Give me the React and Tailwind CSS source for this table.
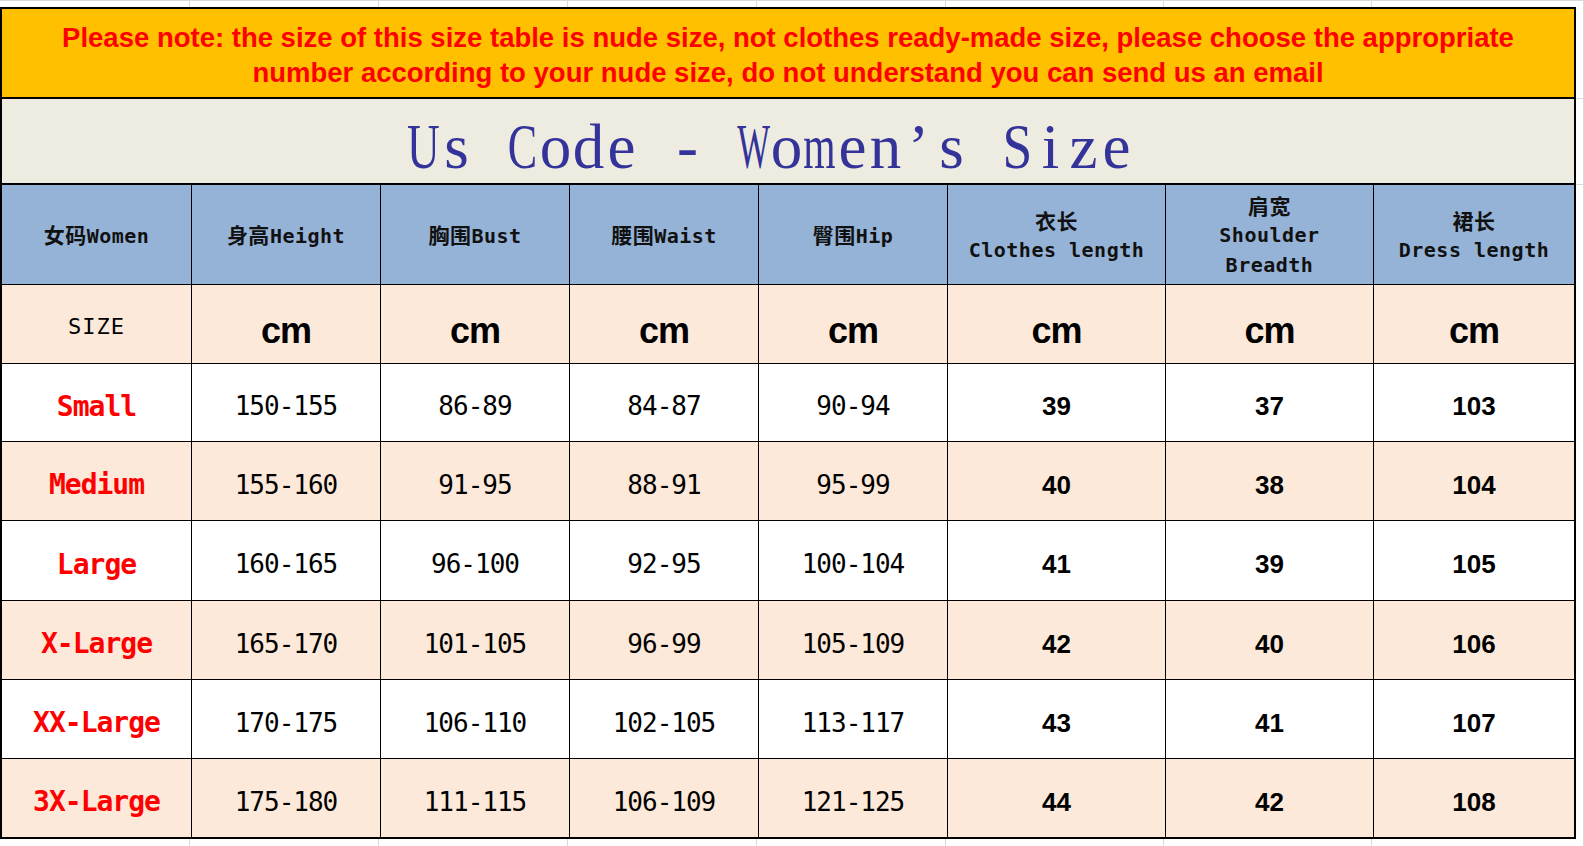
import React from "react";

const cols = "grid grid-cols-[190px_189px_189px_189px_189px_218px_208px_200px]";
const mono = "font-['DejaVu_Sans_Mono','Noto_Sans_CJK_SC',monospace]";
const arial = "font-['Liberation_Sans',Arial,sans-serif]";

const headers = [
  { zh: "女码", en: ["Women"] },
  { zh: "身高", en: ["Height"] },
  { zh: "胸围", en: ["Bust"] },
  { zh: "腰围", en: ["Waist"] },
  { zh: "臀围", en: ["Hip"] },
  { zh: "衣长", en: ["Clothes length"], stack: true },
  { zh: "肩宽", en: ["Shoulder", "Breadth"], stack: true },
  { zh: "裙长", en: ["Dress length"], stack: true },
];

const rows = [
  { size: "Small", h: "h-[78px]", bg: "bg-white", v: ["150-155", "86-89", "84-87", "90-94", "39", "37", "103"] },
  { size: "Medium", h: "h-[79px]", bg: "bg-[#fde9d9]", v: ["155-160", "91-95", "88-91", "95-99", "40", "38", "104"] },
  { size: "Large", h: "h-[80px]", bg: "bg-white", v: ["160-165", "96-100", "92-95", "100-104", "41", "39", "105"] },
  { size: "X-Large", h: "h-[79px]", bg: "bg-[#fde9d9]", v: ["165-170", "101-105", "96-99", "105-109", "42", "40", "106"] },
  { size: "XX-Large", h: "h-[79px]", bg: "bg-white", v: ["170-175", "106-110", "102-105", "113-117", "43", "41", "107"] },
  { size: "3X-Large", h: "h-[78px]", bg: "bg-[#fde9d9]", v: ["175-180", "111-115", "106-109", "121-125", "44", "42", "108"] },
];

// squeeze wide serif letters so the title reads like a half-width CJK font
const squeeze = {
  U: "scale-x-[0.72]",
  C: "scale-x-[0.7]",
  W: "scale-x-[0.55]",
  m: "scale-x-[0.66]",
  S: "scale-x-[0.85]",
};

const title = "Us Code - Women’s Size";

const GridStrip = ({ h }) => (
  <div className={`${cols} ${h} w-[1576px]`}>
    {Array.from({ length: 8 }).map((_, i) => (
      <div key={i} className={i < 7 ? "border-r border-[#d9d9d9]" : ""} />
    ))}
  </div>
);

const HeaderCell = ({ data, last }) => (
  <div
    className={`flex flex-col items-center justify-center border-b border-black ${
      last ? "" : "border-r"
    } ${mono} font-bold text-[20px] leading-[30px] tracking-[0.5px] text-[#111]`}
  >
    {data.stack ? (
      <>
        <span className="font-['Noto_Sans_CJK_SC',sans-serif] font-bold text-[21px]">{data.zh}</span>
        {data.en.map((t) => (
          <span key={t} className="whitespace-pre">{t}</span>
        ))}
      </>
    ) : (
      <span className="whitespace-pre">
        <span className="font-['Noto_Sans_CJK_SC',sans-serif] font-bold text-[21px]">{data.zh}</span>
        {data.en[0]}
      </span>
    )}
  </div>
);

const App = () => {
  return (
    <div className="w-[1584px] h-[846px] bg-white overflow-hidden flex flex-col">
      <div className="flex border-t border-[#d9d9d9] h-[7px]">
        <GridStrip h="h-[6px]" />
        <div className="w-[8px] border-r border-[#d9d9d9]" />
      </div>

      <div className="flex">
        <div className="w-[1576px] border-2 border-black flex flex-col">
          {/* notice banner */}
          <div className={`h-[90px] bg-[#ffc000] border-b-2 border-black flex flex-col items-center justify-center pt-[3px] ${arial} font-bold text-[27.5px] leading-[35px] text-[#ff0000]`}>
            <p>Please note: the size of this size table is nude size, not clothes ready-made size, please choose the appropriate</p>
            <p>number according to your nude size, do not understand you can send us an email</p>
          </div>

          {/* title */}
          <div className="h-[86px] bg-[#eeece1] border-b-2 border-black flex items-center justify-center pt-[12px] pr-[36px]">
            <h1 className="flex font-['Liberation_Serif','Times_New_Roman',serif] text-[63px] leading-none text-[#333399]">
              {title.split("").map((c, i) => (
                <span key={i} className={`inline-flex w-[33px] justify-center ${squeeze[c] || ""}`}>
                  {c === " " ? "\u00a0" : c}
                </span>
              ))}
            </h1>
          </div>

          {/* column headers */}
          <div className={`${cols} h-[100px] bg-[#95b3d7]`}>
            {headers.map((h, i) => (
              <HeaderCell key={h.zh} data={h} last={i === 7} />
            ))}
          </div>

          {/* units row */}
          <div className={`${cols} h-[79px] bg-[#fde9d9]`}>
            <div className={`flex items-center justify-center pt-[4px] border-r border-b border-black ${mono} text-[22px] tracking-[1px] text-black`}>
              SIZE
            </div>
            {Array.from({ length: 7 }).map((_, i) => (
              <div
                key={i}
                className={`flex items-center justify-center pt-[14px] border-b border-black ${i < 6 ? "border-r" : ""} ${arial} font-bold text-[36px] tracking-[-1px] text-black`}
              >
                cm
              </div>
            ))}
          </div>

          {rows.map((r, ri) => (
            <div key={r.size} className={`${cols} ${r.h} ${r.bg}`}>
              <div
                className={`flex items-center justify-center pt-[8px] border-r border-black ${ri < 5 ? "border-b" : ""} ${mono} ${
                  r.size === "Medium" ? "font-bold" : "font-semibold"
                } text-[28px] tracking-[-1px] text-[#ff0000]`}
              >
                {r.size}
              </div>
              {r.v.map((val, i) => (
                <div
                  key={i}
                  className={`flex items-center justify-center pt-[8px] border-black ${i < 6 ? "border-r" : ""} ${ri < 5 ? "border-b" : ""} ${
                    i < 4
                      ? `${mono} text-[26px] tracking-[-1px]`
                      : `${arial} font-bold text-[26px]`
                  } text-black`}
                >
                  {val}
                </div>
              ))}
            </div>
          ))}
        </div>

        {/* spreadsheet margin on the right */}
        <div className="w-[8px] flex flex-col border-r border-[#d9d9d9]">
          <div className="h-[92px] border-b border-[#d9d9d9]" />
          <div className="h-[86px] border-b border-[#d9d9d9]" />
          <div className="flex-1" />
        </div>
      </div>

      <div className="flex flex-1">
        <GridStrip h="h-full" />
        <div className="w-[8px] border-r border-[#d9d9d9]" />
      </div>
    </div>
  );
};

export default App;
